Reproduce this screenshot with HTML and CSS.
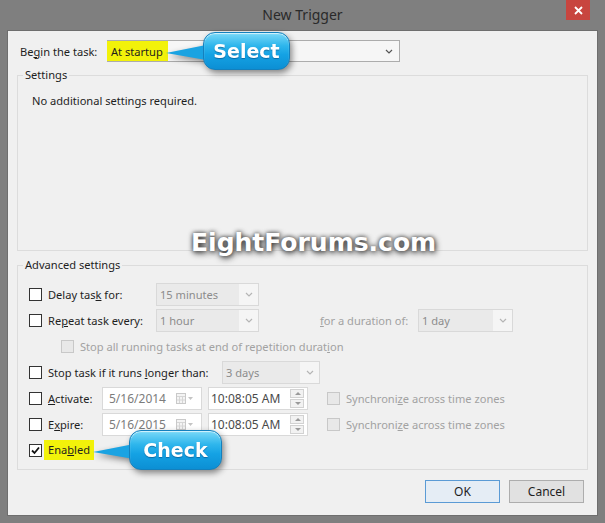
FILE: index.html
```html
<!DOCTYPE html>
<html lang="en">
<head>
    <meta charset="UTF-8">
    <title>New Trigger</title>
    <link rel="stylesheet" href="styles.css">
</head>
<body>
    <div class="window">
        <div class="titlebar">
            <span class="title">New Trigger</span>
            <span class="close">
                <svg width="9" height="9" viewBox="0 0 9 9"><path d="M1 1L8 8M8 1L1 8" stroke="#fff" stroke-width="1.8"/></svg>
            </span>
        </div>

        <div class="client">
            <div class="begin-row">
                <span class="begin-label">Be<u>g</u>in the task:</span>
                <div class="combo combo-begin">
                    <span class="hl">At startup</span>
                    <svg class="chev" width="8" height="5" viewBox="0 0 8 5"><path d="M1 1L4 4L7 1" fill="none" stroke="#555" stroke-width="1.2"/></svg>
                </div>
            </div>

            <fieldset class="group">
                <legend>Settings</legend>
                <div class="settings-body">No additional settings required.</div>
            </fieldset>

            <fieldset class="group group-advanced">
                <legend>Advanced settings</legend>

                <div class="row">
                    <span class="check"></span>
                    <span class="lbl lbl-delay">Delay tas<u>k</u> for:</span>
                    <div class="combo off w-delay"><span class="val">15 minutes</span><span class="arrow"><svg width="8" height="5" viewBox="0 0 8 5"><path d="M1 1L4 4L7 1" fill="none" stroke="#b5b5b5" stroke-width="1.2"/></svg></span></div>
                </div>

                <div class="row">
                    <span class="check"></span>
                    <span class="lbl lbl-delay">Re<u>p</u>eat task every:</span>
                    <div class="combo off w-delay"><span class="val">1 hour</span><span class="arrow"><svg width="8" height="5" viewBox="0 0 8 5"><path d="M1 1L4 4L7 1" fill="none" stroke="#b5b5b5" stroke-width="1.2"/></svg></span></div>
                    <span class="lbl dim lbl-duration"><u>f</u>or a duration of:</span>
                    <div class="combo off w-day"><span class="val">1 day</span><span class="arrow"><svg width="8" height="5" viewBox="0 0 8 5"><path d="M1 1L4 4L7 1" fill="none" stroke="#b5b5b5" stroke-width="1.2"/></svg></span></div>
                </div>

                <div class="row">
                    <span class="check off indent"></span>
                    <span class="lbl dim">Stop all running tasks at end of repetition durat<u>i</u>on</span>
                </div>

                <div class="row">
                    <span class="check"></span>
                    <span class="lbl lbl-stop">Stop task if it runs <u>l</u>onger than:</span>
                    <div class="combo off w-stop"><span class="val">3 days</span><span class="arrow"><svg width="8" height="5" viewBox="0 0 8 5"><path d="M1 1L4 4L7 1" fill="none" stroke="#b5b5b5" stroke-width="1.2"/></svg></span></div>
                </div>

                <div class="row">
                    <span class="check"></span>
                    <span class="lbl lbl-date"><u>A</u>ctivate:</span>
                    <div class="field date">
                        <span class="val">5/16/2014</span>
                        <svg class="cal" width="17" height="11" viewBox="0 0 17 11"><rect x="0.5" y="0.5" width="9" height="10" fill="#f4f4f4" stroke="#c9c9c9"/><path d="M1 3.5H9M3.5 4V10M6.5 4V10M1 7H9" stroke="#d6d6d6"/><path d="M12 4H17L14.5 7Z" fill="#c4c4c4"/></svg>
                    </div>
                    <div class="field time">
                        <span class="val">10:08:05 AM</span>
                        <span class="spin"><span class="up"></span><span class="down"></span></span>
                    </div>
                    <span class="check off sync"></span>
                    <span class="lbl dim">Synchroni<u>z</u>e across time zones</span>
                </div>

                <div class="row">
                    <span class="check"></span>
                    <span class="lbl lbl-date">E<u>x</u>pire:</span>
                    <div class="field date">
                        <span class="val">5/16/2015</span>
                        <svg class="cal" width="17" height="11" viewBox="0 0 17 11"><rect x="0.5" y="0.5" width="9" height="10" fill="#f4f4f4" stroke="#c9c9c9"/><path d="M1 3.5H9M3.5 4V10M6.5 4V10M1 7H9" stroke="#d6d6d6"/><path d="M12 4H17L14.5 7Z" fill="#c4c4c4"/></svg>
                    </div>
                    <div class="field time">
                        <span class="val">10:08:05 AM</span>
                        <span class="spin"><span class="up"></span><span class="down"></span></span>
                    </div>
                    <span class="check off sync"></span>
                    <span class="lbl dim">Synchroni<u>z</u>e across time zones</span>
                </div>

                <div class="row">
                    <span class="check on">
                        <svg width="11" height="11" viewBox="0 0 11 11"><path d="M2 5.5L4.5 8L9 2.5" fill="none" stroke="#111" stroke-width="1.8"/></svg>
                    </span>
                    <span class="lbl hl-enabled">Ena<u>b</u>led</span>
                </div>
            </fieldset>

            <div class="buttons">
                <button class="btn btn-default">OK</button>
                <button class="btn">Cancel</button>
            </div>
        </div>

        <div class="watermark">EightForums.com</div>

        <div class="callout callout-select">
            <svg class="tail" width="50" height="25" viewBox="0 0 50 25"><polygon points="6,13 46,5 46,20" fill="#1aa3e2"/></svg>
            <div class="bubble">Select</div>
        </div>

        <div class="callout callout-check">
            <svg class="tail" width="48" height="26" viewBox="0 0 48 26"><polygon points="5,14 46,6 46,21" fill="#1aa3e2"/></svg>
            <div class="bubble">Check</div>
        </div>
    </div>
</body>
</html>
```

FILE: styles.css
```css
body {
    margin: 0;
    background: #7f7f7f;
    font-family: "Noto Sans", "Open Sans", sans-serif;
    font-size: 11.1px;
    color: #1e1e1e;
}

.window {
    position: relative;
    width: 605px;
    height: 523px;
    background: #7f7f7f;
    overflow: hidden;
}

.titlebar {
    height: 31px;
    display: flex;
    justify-content: center;
    align-items: center;
    position: relative;
}

.title {
    font-size: 14px;
    color: #2a2a2a;
    margin-top: -2px;
}

.close {
    position: absolute;
    top: 0;
    right: 15px;
    width: 24px;
    height: 20px;
    background: #c8453f;
    display: flex;
    justify-content: center;
    align-items: center;
}

.client {
    margin: 0 8px;
    height: 484px;
    background: #f0f0f0;
    box-shadow: 0 0 0 1px #6e6e6e;
    overflow: hidden;
}

.begin-row {
    display: flex;
    align-items: center;
    margin-top: 9px;
    padding-left: 12px;
    height: 22px;
}

.begin-label {
    width: 87px;
}

.combo {
    display: flex;
    align-items: center;
    box-sizing: border-box;
    height: 22px;
}

.combo-begin {
    width: 293px;
    border: 1px solid #acacac;
    background: #f6f6f6;
}

.combo-begin .hl {
    background: #f2f20a;
    height: 100%;
    display: flex;
    align-items: center;
    padding: 0 5px 0 4px;
    margin-left: -1px;
}

.combo-begin .chev {
    margin-left: auto;
    margin-right: 6px;
}

.group {
    margin: 5px 9px 0;
    padding: 0;
    border: 1px solid #dcdcdc;
    min-width: 0;
}

.group legend {
    padding: 0 2px;
    margin-left: 5px;
    line-height: 16px;
}

.settings-body {
    height: 167px;
    box-sizing: border-box;
    padding: 10px 0 0 14px;
    line-height: 16px;
}

.group-advanced {
    margin-top: 6px;
    padding: 8px 0 6px;
}

.row {
    display: flex;
    align-items: center;
    height: 26px;
    padding-left: 11px;
}

.check {
    width: 13px;
    height: 13px;
    box-sizing: border-box;
    border: 1px solid #333;
    background: #fff;
    flex: none;
    display: flex;
    align-items: center;
    justify-content: center;
}

.check.off {
    border-color: #c8c8c8;
    background: #e8e8e8;
}

.check.indent {
    margin-left: 32px;
}

.lbl {
    margin-left: 6px;
    white-space: nowrap;
    flex: none;
}

.dim {
    color: #a2a2a2;
}

.lbl-delay { width: 108px; }
.lbl-stop { width: 174px; }
.lbl-date { width: 54px; }

.lbl-duration {
    margin-left: 61px;
    width: 98px;
}

.combo.off {
    border: 1px solid #d9d9d9;
    background: #f5f5f5;
    height: 23px;
}

.combo.off .val {
    flex: 1;
    height: 100%;
    display: flex;
    align-items: center;
    padding-left: 3px;
    background: #eaeaea;
    color: #8c8c8c;
}

.combo.off .arrow {
    width: 19px;
    display: flex;
    justify-content: center;
}

.w-delay { width: 103px; }
.w-day { width: 95px; }
.w-stop { width: 98px; }

.field {
    display: flex;
    align-items: center;
    box-sizing: border-box;
    width: 100px;
    height: 23px;
    border: 1px solid #d9d9d9;
    background: #fff;
}

.date .val {
    padding-left: 6px;
    color: #7c7c7c;
    font-size: 12px;
}

.date .cal {
    margin-left: auto;
    margin-right: 8px;
}

.time {
    margin-left: 6px;
}

.time .val {
    padding-left: 2px;
    color: #4a4a4a;
    font-size: 12px;
}

.spin {
    margin-left: auto;
    margin-right: 3px;
    width: 14px;
    display: flex;
    flex-direction: column;
    gap: 1px;
}

.spin span {
    height: 7px;
    border: 1px solid #d2d2d2;
    background: #f2f2f2;
    position: relative;
}

.spin span::after {
    content: "";
    position: absolute;
    left: 4px;
    border-left: 3px solid transparent;
    border-right: 3px solid transparent;
}

.spin .up::after {
    top: 2px;
    border-bottom: 3px solid #9a9a9a;
}

.spin .down::after {
    top: 2px;
    border-top: 3px solid #9a9a9a;
}

.check.sync {
    margin-left: 19px;
}

.hl-enabled {
    margin-left: 2px;
    padding: 0 4px;
    line-height: 20px;
    background: #f2f20a;
}

.buttons {
    display: flex;
    justify-content: flex-end;
    gap: 9px;
    margin-top: 10px;
    padding-right: 13px;
}

.btn {
    width: 75px;
    height: 23px;
    font-family: inherit;
    font-size: 12px;
    color: #1e1e1e;
    background: #e1e1e1;
    border: 1px solid #adadad;
    padding: 0;
}

.btn-default {
    background: #e5edf5;
    border-color: #5b9bd5;
}

.watermark {
    position: absolute;
    left: 191px;
    top: 228px;
    font-family: "DejaVu Sans", sans-serif;
    font-weight: bold;
    font-size: 25px;
    color: #fff;
    text-shadow: 0 0 4px #444, 1px 2px 6px #333;
}

.callout {
    position: absolute;
    filter: drop-shadow(2px 3px 3px rgba(0, 0, 0, 0.45));
}

.callout .tail {
    position: absolute;
}

.bubble {
    position: relative;
    box-sizing: border-box;
    border-radius: 12px;
    border: 1px solid #1480bd;
    background: linear-gradient(#7ad9f8 0%, #2fb6ec 35%, #14a2e4 60%, #0c8fd4 100%);
    box-shadow: inset 0 1px 1px rgba(255, 255, 255, 0.7);
    color: #fff;
    font-family: "DejaVu Sans", sans-serif;
    font-weight: bold;
    font-size: 19px;
    display: flex;
    align-items: center;
    justify-content: center;
    text-shadow: 0 1px 1px rgba(0, 60, 110, 0.5);
}

.callout-select {
    left: 160px;
    top: 32px;
}

.callout-select .tail {
    left: 0;
    top: 8px;
}

.callout-select .bubble {
    margin-left: 43px;
    width: 87px;
    height: 38px;
}

.callout-check {
    left: 88px;
    top: 430px;
}

.callout-check .tail {
    left: 0;
    top: 8px;
}

.callout-check .bubble {
    margin-left: 41px;
    width: 93px;
    height: 40px;
}
```
